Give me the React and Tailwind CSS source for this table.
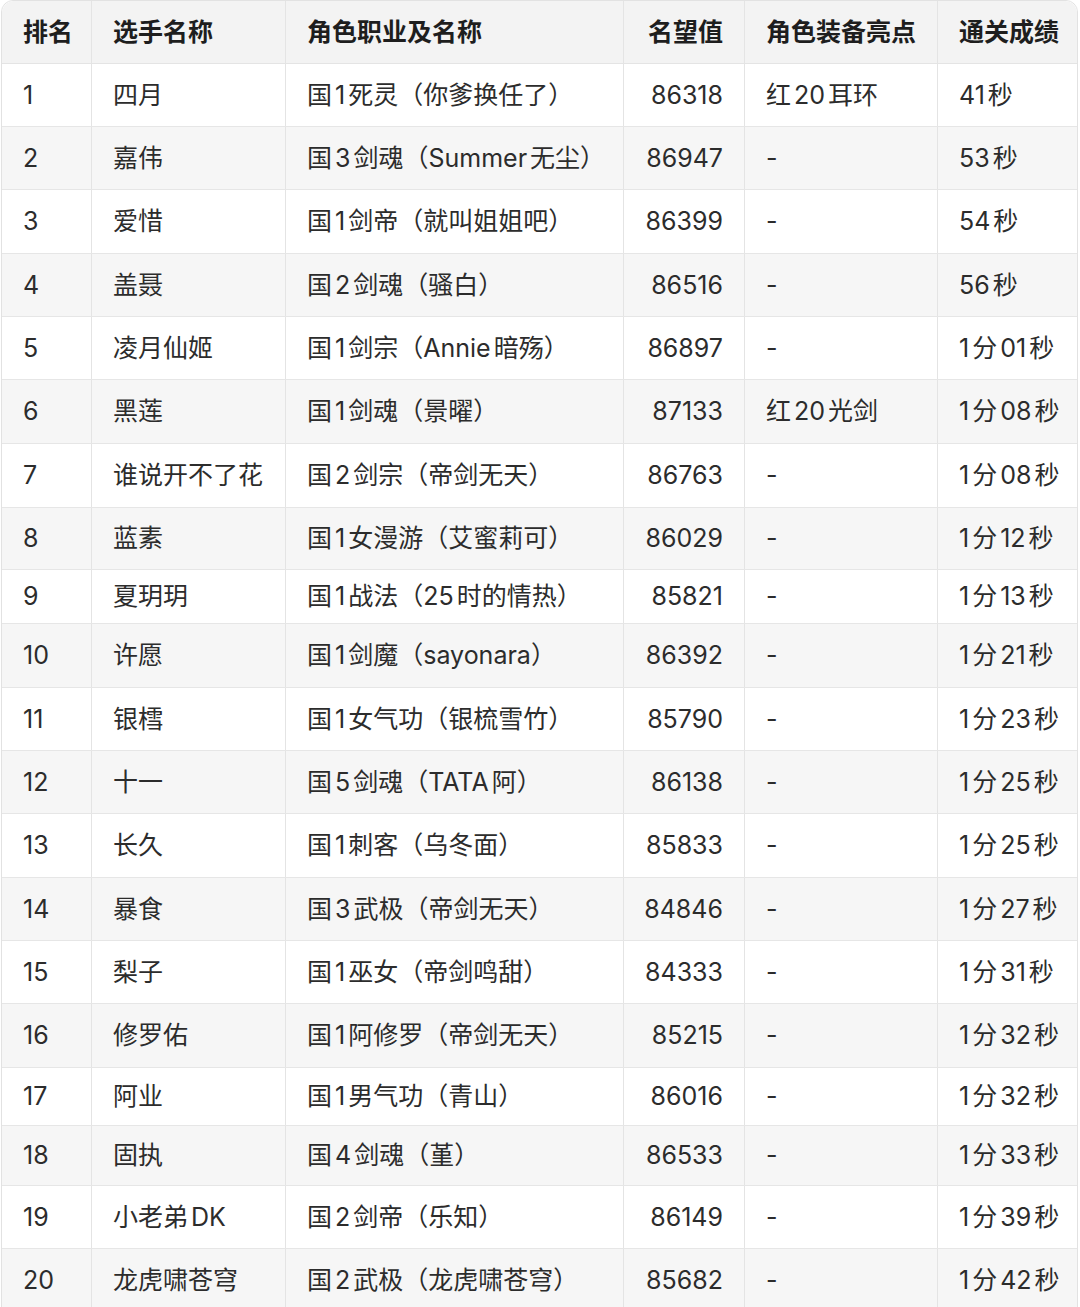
const rows = [
  ["1", "四月", "国1死灵（你爹换任了）", "86318", "红20耳环", "41秒", 63],
  ["2", "嘉伟", "国3剑魂（Summer无尘）", "86947", "-", "53秒", 63],
  ["3", "爱惜", "国1剑帝（就叫姐姐吧）", "86399", "-", "54秒", 64],
  ["4", "盖聂", "国2剑魂（骚白）", "86516", "-", "56秒", 63],
  ["5", "凌月仙姬", "国1剑宗（Annie暗殇）", "86897", "-", "1分01秒", 63],
  ["6", "黑莲", "国1剑魂（景曜）", "87133", "红20光剑", "1分08秒", 64],
  ["7", "谁说开不了花", "国2剑宗（帝剑无天）", "86763", "-", "1分08秒", 64],
  ["8", "蓝素", "国1女漫游（艾蜜莉可）", "86029", "-", "1分12秒", 62],
  ["9", "夏玥玥", "国1战法（25时的情热）", "85821", "-", "1分13秒", 54],
  ["10", "许愿", "国1剑魔（sayonara）", "86392", "-", "1分21秒", 64],
  ["11", "银樰", "国1女气功（银梳雪竹）", "85790", "-", "1分23秒", 63],
  ["12", "十一", "国5剑魂（TATA阿）", "86138", "-", "1分25秒", 63],
  ["13", "长久", "国1刺客（乌冬面）", "85833", "-", "1分25秒", 64],
  ["14", "暴食", "国3武极（帝剑无天）", "84846", "-", "1分27秒", 63],
  ["15", "梨子", "国1巫女（帝剑鸣甜）", "84333", "-", "1分31秒", 63],
  ["16", "修罗佑", "国1阿修罗（帝剑无天）", "85215", "-", "1分32秒", 64],
  ["17", "阿业", "国1男气功（青山）", "86016", "-", "1分32秒", 58],
  ["18", "固执", "国4剑魂（堇）", "86533", "-", "1分33秒", 60],
  ["19", "小老弟DK", "国2剑帝（乐知）", "86149", "-", "1分39秒", 63],
  ["20", "龙虎啸苍穹", "国2武极（龙虎啸苍穹）", "85682", "-", "1分42秒", 64],
];

const grid = "grid grid-cols-[90px_194px_338px_121px_193px_1fr]";

// mimic the small gap iOS puts between CJK and latin runs
function Spaced({ text }) {
  const parts = text.split(/([A-Za-z0-9]+)/).filter((p) => p !== "");
  return parts.map((p, i) => {
    if (!/^[A-Za-z0-9]+$/.test(p)) return <span key={i}>{p}</span>;
    const prev = parts[i - 1];
    const next = parts[i + 1];
    const left = prev && !/[（）]$/.test(prev) ? "ml-[3px]" : "";
    const right = next && !/^[（）]/.test(next) ? "mr-[3px]" : "";
    return (
      <span key={i} className={`${left} ${right}`}>
        {p}
      </span>
    );
  });
}

function Cell({ children, last, right }) {
  return (
    <div
      className={`flex items-center whitespace-nowrap px-[21px] ${right ? "justify-end" : ""} ${
        last ? "" : "border-r border-[#e4e4e4]"
      }`}
    >
      {children}
    </div>
  );
}

export default function App() {
  return (
    <div
      className="h-[1307px] overflow-hidden bg-white pl-px pr-[2px] text-[25px] leading-none text-[#2c2c2c] [text-spacing-trim:space-all]"
      style={{ fontFamily: 'Inter, "Noto Sans CJK SC", sans-serif' }}
    >
      <div className="rounded-t-[12px] border border-[#e2e2e2]">
        <div className={`${grid} h-[63px] rounded-t-[12px] border-b border-[#e4e4e4] bg-[#f3f3f3] font-bold text-[#1e1e1e]`}>
          <Cell>排名</Cell>
          <Cell>选手名称</Cell>
          <Cell>角色职业及名称</Cell>
          <Cell right>名望值</Cell>
          <Cell>角色装备亮点</Cell>
          <Cell last>通关成绩</Cell>
        </div>
        {rows.map((r, i) => (
          <div
            key={r[0]}
            className={`${grid} border-b border-[#e6e6e6] ${i % 2 === 0 ? "bg-white" : "bg-[#f6f6f6]"}`}
            style={{ height: r[6] }}
          >
            <Cell>{r[0]}</Cell>
            <Cell>
              <Spaced text={r[1]} />
            </Cell>
            <Cell>
              <Spaced text={r[2]} />
            </Cell>
            <Cell right>{r[3]}</Cell>
            <Cell>
              <Spaced text={r[4]} />
            </Cell>
            <Cell last>
              <Spaced text={r[5]} />
            </Cell>
          </div>
        ))}
      </div>
    </div>
  );
}
